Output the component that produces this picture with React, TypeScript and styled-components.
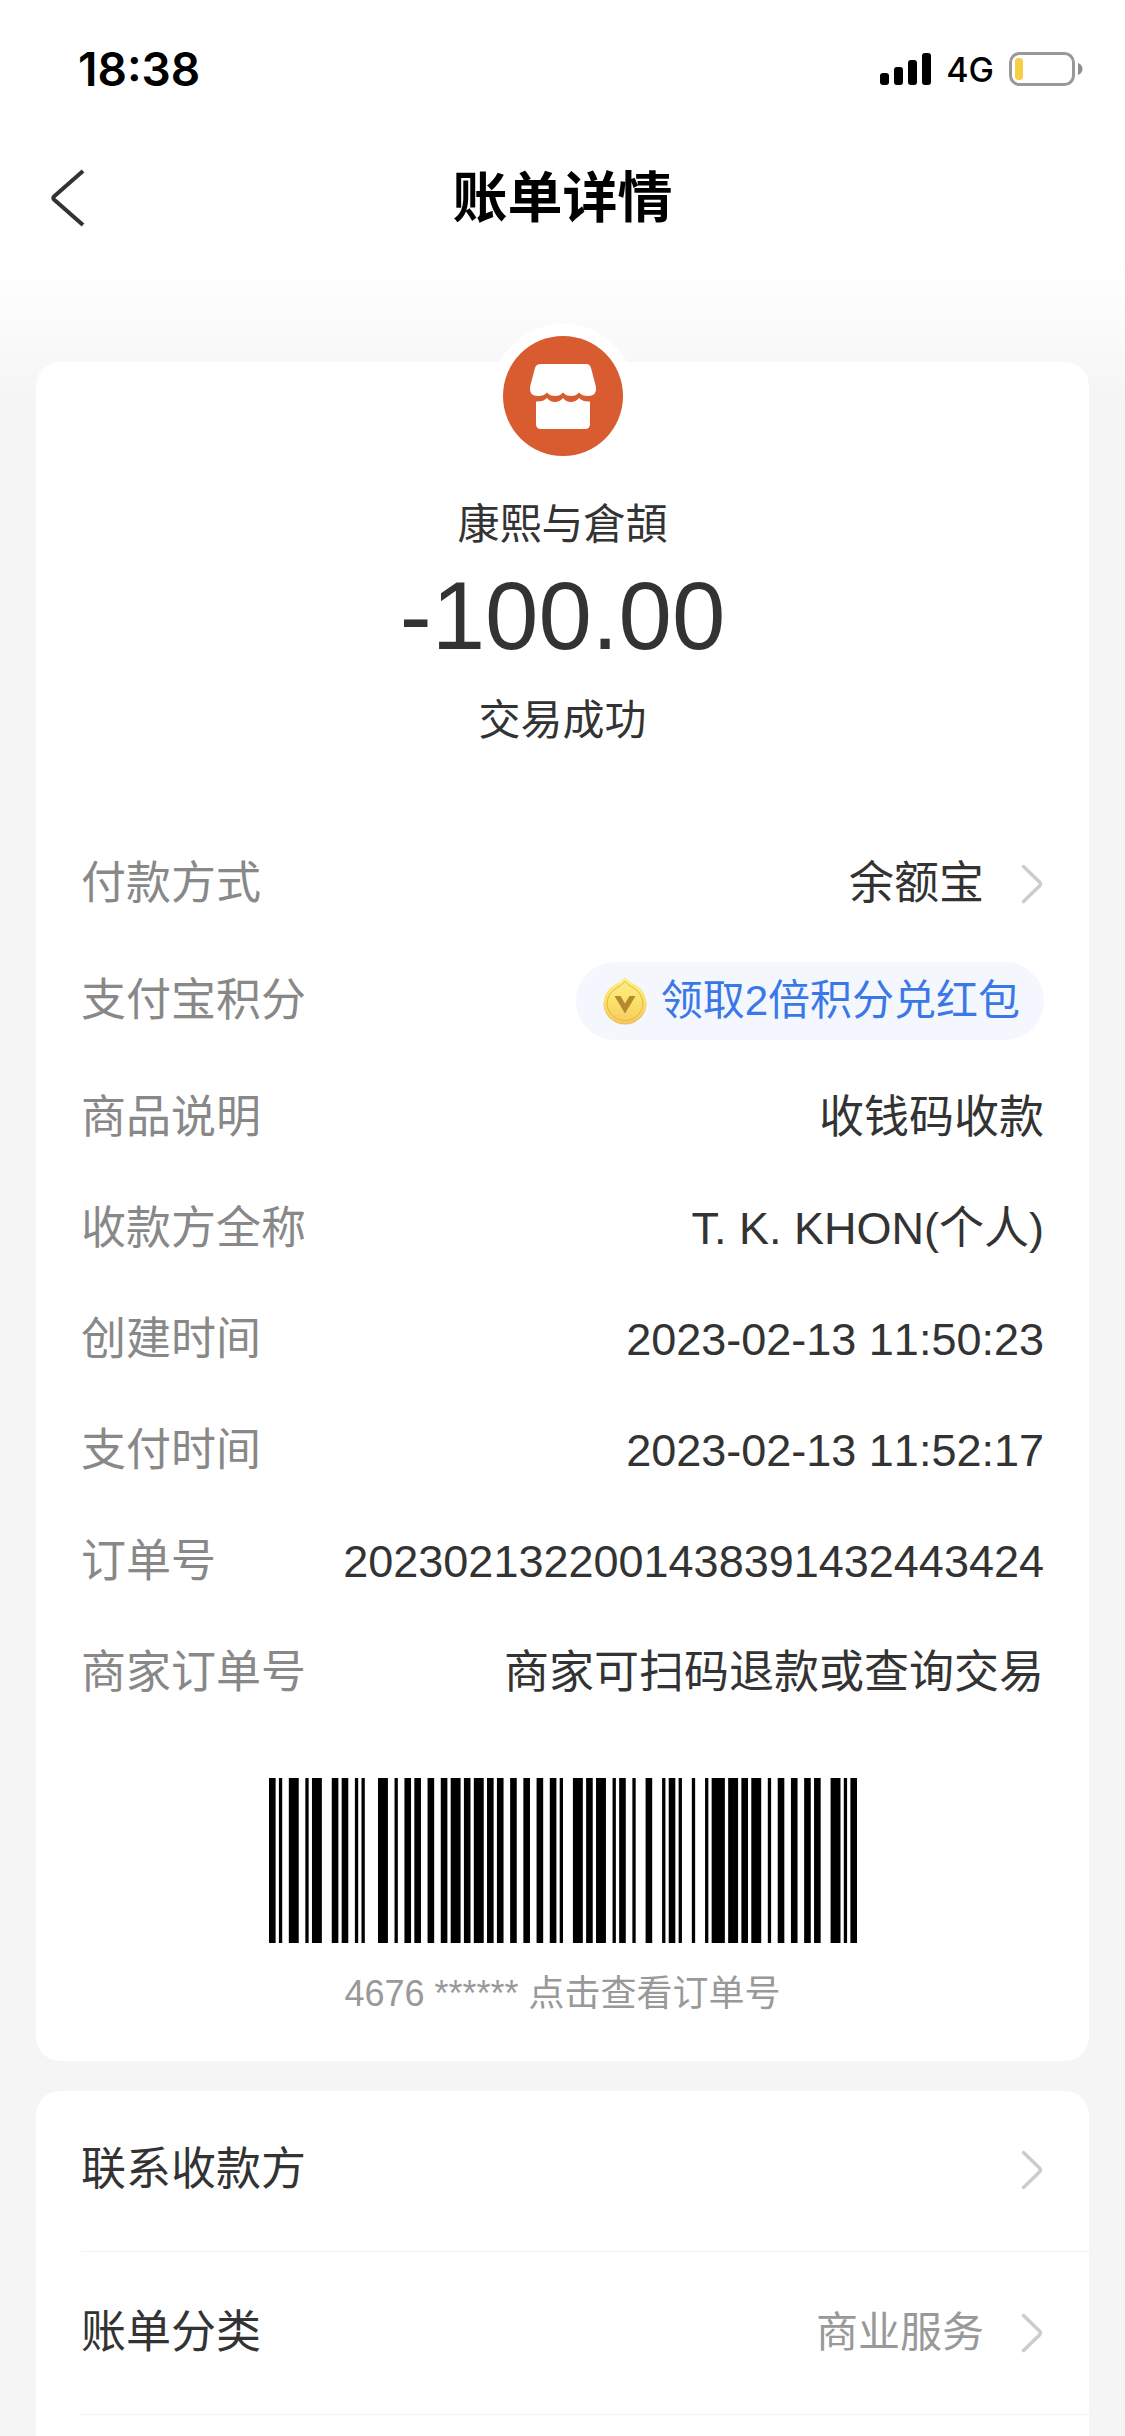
import React from "react";
import styled, { createGlobalStyle } from "styled-components";

const GlobalStyle = createGlobalStyle`
  *, *::before, *::after { box-sizing: border-box; }
  body {
    margin: 0;
    background: #f5f5f5;
    color: #333;
    font-family: "Liberation Sans", "Noto Sans CJK SC", sans-serif;
  }
  button {
    margin: 0;
    padding: 0;
    border: 0;
    background: none;
    color: inherit;
    font: inherit;
    text-align: inherit;
    cursor: pointer;
  }
`;

const Page = styled.div`
  display: flex;
  flex-direction: column;
  min-height: 100vh;
  background: linear-gradient(#fff 264px, #f5f5f5 400px);
`;

const StatusBar = styled.div`
  display: flex;
  align-items: center;
  justify-content: space-between;
  height: 138px;
  padding: 0 42px 0 78px;
  color: #000;
  font-family: Inter, sans-serif;
`;

const Clock = styled.time`
  font-size: 46px;
  font-weight: 600;
`;

const Indicators = styled.div`
  display: flex;
  align-items: center;
  gap: 15px;
`;

const Network = styled.span`
  font-size: 34px;
  font-weight: 500;
`;

const NavBar = styled.header`
  display: grid;
  grid-template-columns: 1fr auto 1fr;
  align-items: center;
  height: 120px;
  padding: 0 48px;
`;

const BackButton = styled.button`
  display: flex;
  justify-self: start;
`;

const Title = styled.h1`
  margin: 0;
  color: #000;
  font-size: 55px;
  font-weight: 700;
  line-height: 66px;
`;

const Content = styled.main`
  display: flex;
  flex: 1;
  flex-direction: column;
  gap: 30px;
  padding: 104px 36px 0;
`;

const BillCard = styled.section`
  display: flex;
  flex-direction: column;
  align-items: center;
  padding: 0 45px 43px;
  border-radius: 24px;
  background: #fff;
`;

const Avatar = styled.div`
  display: flex;
  margin-top: -38px;
  border: 12px solid #fff;
  border-radius: 50%;
`;

const Caption = styled.p`
  margin: 27px 0 0;
  font-size: 42px;
  line-height: 60px;
`;

const Amount = styled.p`
  margin: 13px 0 0;
  font-size: 96px;
  line-height: 96px;
`;

const Details = styled.dl`
  display: flex;
  flex-direction: column;
  gap: 45px;
  width: 100%;
  margin: 100px 0 0;
  font-size: 45px;
  line-height: 66px;
`;

const DetailRow = styled.div`
  display: flex;
  align-items: center;
  justify-content: space-between;
`;

const Label = styled.dt`
  color: #888;
`;

const Value = styled.dd<{ $numeric?: boolean }>`
  margin: 0;
  font-kerning: ${({ $numeric }) => ($numeric ? "none" : "auto")};
`;

const ValueButton = styled.button`
  display: flex;
  align-items: center;
  gap: 36px;
`;

const RewardButton = styled.button`
  display: flex;
  align-items: center;
  gap: 14px;
  height: 78px;
  padding: 0 24px 0 27px;
  border-radius: 39px;
  background: #f4f7fd;
  color: #3b78e7;
  font-size: 42px;
`;

const BarcodeButton = styled.button`
  display: flex;
  flex-direction: column;
  align-items: center;
  gap: 27px;
  margin-top: 72px;
  color: #999;
  font-size: 36px;
  line-height: 48px;
`;

const ActionCard = styled.section`
  flex: 1;
  padding-left: 45px;
  border-radius: 24px 24px 0 0;
  background: #fff;
`;

const ActionRow = styled.button`
  display: flex;
  align-items: center;
  justify-content: space-between;
  width: 100%;
  padding: 48px 45px 48px 0;
  border-bottom: 1px solid #f2f2f2;
  font-size: 45px;
  line-height: 66px;

  &:first-child {
    padding-top: 46px;
  }
`;

const ActionValue = styled.span`
  display: flex;
  align-items: center;
  gap: 36px;
  color: #999;
  font-size: 42px;
`;

// Start and end module of every black bar, 178 modules in all.
const bars: [number, number][] = [
  [0, 2], [3, 4], [6, 9], [11, 12], [13, 16], [19, 21], [22, 24], [26, 27],
  [28, 29], [33, 36], [38, 39], [41, 43], [44, 46], [48, 50], [52, 54],
  [55, 58], [59, 61], [62, 65], [66, 68], [69, 71], [73, 75], [77, 79],
  [81, 83], [85, 87], [88, 89], [92, 95], [96, 98], [99, 102], [104, 105],
  [106, 108], [110, 111], [114, 116], [119, 120], [121, 123], [124, 125],
  [128, 129], [132, 133], [134, 138], [139, 142], [143, 145], [146, 149],
  [151, 152], [154, 156], [158, 160], [162, 164], [165, 167], [170, 173],
  [174, 175], [176, 178],
];

function Barcode() {
  return (
    <svg width="588" height="165" viewBox="0 0 178 50" preserveAspectRatio="none" aria-hidden="true">
      {bars.map(([start, end]) => (
        <rect key={start} x={start} y="0" width={end - start} height="50" fill="#000" />
      ))}
    </svg>
  );
}

function Signal() {
  return (
    <svg width="51" height="32" viewBox="0 0 51 32" aria-hidden="true">
      <rect x="0" y="20" width="9" height="12" rx="3" />
      <rect x="14" y="14" width="9" height="18" rx="3" />
      <rect x="28" y="7" width="9" height="25" rx="3" />
      <rect x="42" y="0" width="9" height="32" rx="3" />
    </svg>
  );
}

function Battery() {
  return (
    <svg width="74" height="34" viewBox="0 0 74 34" aria-hidden="true">
      <rect x="1.5" y="1.5" width="63" height="31" rx="9" fill="none" stroke="#999" strokeWidth="3" />
      <rect x="6" y="6" width="8" height="22" rx="3.5" fill="#f7ce46" />
      <path d="M69 11c3 1 4.500 3.500 4.500 6s-1.500 5-4.500 6z" fill="#8e8e8e" />
    </svg>
  );
}

function BackIcon() {
  return (
    <svg width="38" height="58" viewBox="0 0 38 58" aria-hidden="true">
      <path d="M35 2L6 27.500Q4.500 29 6 30.500L35 56" fill="none" stroke="#333" strokeWidth="4" />
    </svg>
  );
}

function Chevron() {
  return (
    <svg width="24" height="42" viewBox="0 0 24 42" aria-hidden="true">
      <path
        d="M3.500 3.500L19.500 19Q21.500 21 19.500 23L3.500 38.500"
        fill="none"
        stroke="#ccc"
        strokeWidth="3.500"
        strokeLinecap="round"
      />
    </svg>
  );
}

function ShopIcon() {
  return (
    <svg width="120" height="120" viewBox="0 0 120 120" aria-hidden="true">
      <circle cx="60" cy="60" r="60" fill="#d85c30" />
      <path
        d="M38 28H83Q87 28 88 32L93 51Q94 60 85 60Q79 60 76 56.500Q73 60 68 60T60 56.500Q57 60 52 60T44 56.500Q41 60 35 60Q26 60 27 51L32 32Q33 28 38 28Z"
        fill="#fff"
      />
      <path
        d="M33 65.500Q40 66 44 62Q47 66 52 66T60 62Q63 66 68 66T76 62Q80 66 87 65.500V88Q87 93 82 93H38Q33 93 33 88Z"
        fill="#fff"
      />
    </svg>
  );
}

function Coin() {
  return (
    <svg width="44" height="48" viewBox="0 0 44 48" aria-hidden="true">
      <defs>
        <linearGradient id="coinFace" x1="0" y1="0" x2="0" y2="1">
          <stop offset="0" stopColor="#fbf08a" />
          <stop offset="0.500" stopColor="#fbe36a" />
          <stop offset="1" stopColor="#f8cb5e" />
        </linearGradient>
      </defs>
      <path d="M22 1Q25 5 32 8.500Q42 14 43.500 26.500A21.500 21 0 0 1 .500 26.500Q2 14 12 8.500Q19 5 22 1Z" fill="#efc05a" />
      <path d="M22 0Q25 4 32 7.500Q42 13 43.500 25A21.500 21 0 0 1 .500 25Q2 13 12 7.500Q19 4 22 0Z" fill="url(#coinFace)" />
      <path
        d="M22 4.500Q25 8 30.500 11Q39 16 40 26A18 17.500 0 0 1 4 26Q5 16 13.500 11Q19 8 22 4.500Z"
        fill="none"
        stroke="#e3b548"
      />
      <path d="M11.500 19H17.500L22 26.500L26.500 19H32.500L22 36.500Z" fill="#b5892f" />
    </svg>
  );
}

type Detail = { label: string; value: string; numeric?: boolean };

const details: Detail[] = [
  { label: "商品说明", value: "收钱码收款" },
  { label: "收款方全称", value: "T. K. KHON(个人)" },
  { label: "创建时间", value: "2023-02-13 11:50:23", numeric: true },
  { label: "支付时间", value: "2023-02-13 11:52:17", numeric: true },
  { label: "订单号", value: "2023021322001438391432443424", numeric: true },
  { label: "商家订单号", value: "商家可扫码退款或查询交易" },
];

export default function App() {
  return (
    <Page lang="zh-CN">
      <GlobalStyle />
      <StatusBar>
        <Clock>18:38</Clock>
        <Indicators>
          <Signal />
          <Network>4G</Network>
          <Battery />
        </Indicators>
      </StatusBar>
      <NavBar>
        <BackButton type="button" aria-label="返回">
          <BackIcon />
        </BackButton>
        <Title>账单详情</Title>
      </NavBar>
      <Content>
        <BillCard>
          <Avatar>
            <ShopIcon />
          </Avatar>
          <Caption>康熙与倉頡</Caption>
          <Amount>-100.00</Amount>
          <Caption>交易成功</Caption>
          <Details>
            <DetailRow>
              <Label>付款方式</Label>
              <Value>
                <ValueButton type="button">
                  余额宝
                  <Chevron />
                </ValueButton>
              </Value>
            </DetailRow>
            <DetailRow>
              <Label>支付宝积分</Label>
              <Value>
                <RewardButton type="button">
                  <Coin />
                  领取2倍积分兑红包
                </RewardButton>
              </Value>
            </DetailRow>
            {details.map(({ label, value, numeric }) => (
              <DetailRow key={label}>
                <Label>{label}</Label>
                <Value $numeric={numeric}>{value}</Value>
              </DetailRow>
            ))}
          </Details>
          <BarcodeButton type="button">
            <Barcode />
            <span>4676 ****** 点击查看订单号</span>
          </BarcodeButton>
        </BillCard>
        <ActionCard>
          <ActionRow type="button">
            联系收款方
            <Chevron />
          </ActionRow>
          <ActionRow type="button">
            账单分类
            <ActionValue>
              商业服务
              <Chevron />
            </ActionValue>
          </ActionRow>
        </ActionCard>
      </Content>
    </Page>
  );
}
